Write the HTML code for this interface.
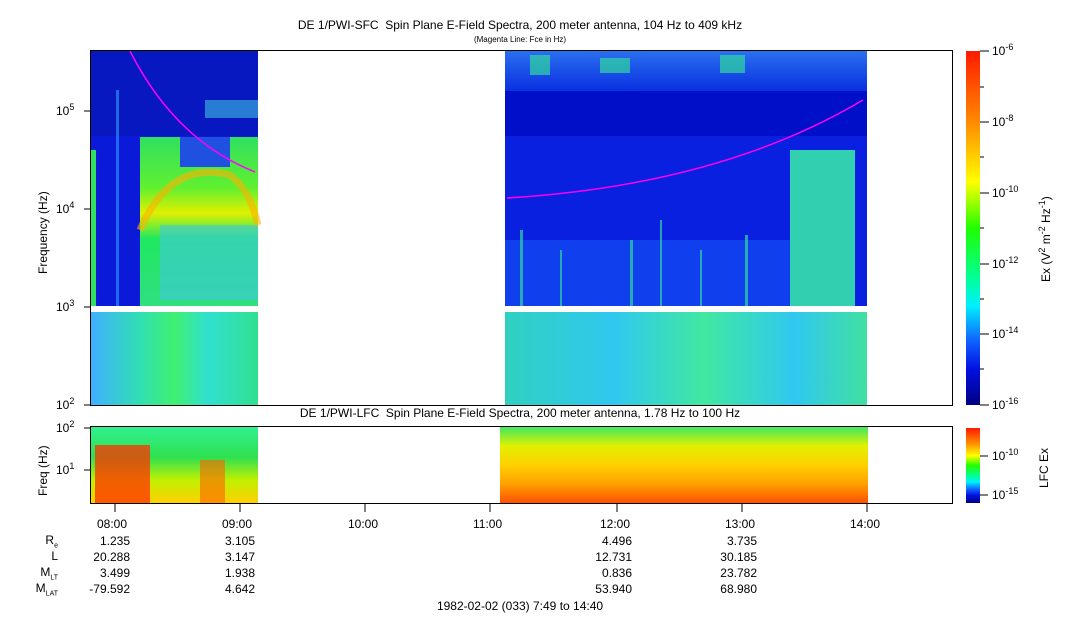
<!DOCTYPE html>
<html><head><meta charset="utf-8"><style>
body{margin:0;background:#fff;width:1083px;height:620px;overflow:hidden;font-family:"Liberation Sans",sans-serif;color:#000}
.t{position:absolute;font-size:12px;white-space:nowrap}
.r{text-align:right}
</style></head><body>
<div class="t" style="left:0;width:1040px;text-align:center;top:18px">DE 1/PWI-SFC&nbsp; Spin Plane E-Field Spectra, 200 meter antenna, 104 Hz to 409 kHz</div>
<div class="t" style="left:0;width:1040px;text-align:center;top:35px;font-size:8px">(Magenta Line: Fce in Hz)</div>
<div class="t" style="left:0;width:1040px;text-align:center;top:406px">DE 1/PWI-LFC&nbsp; Spin Plane E-Field Spectra, 200 meter antenna, 1.78 Hz to 100 Hz</div>

<svg width="1083" height="620" style="position:absolute;left:0;top:0">
<defs>
<linearGradient id="cb" x1="0" y1="0" x2="0" y2="1">
<stop offset="0" stop-color="#ff1a00"/><stop offset="0.2" stop-color="#ff8a00"/><stop offset="0.37" stop-color="#ffff00"/><stop offset="0.5" stop-color="#20ff00"/><stop offset="0.65" stop-color="#00ffa0"/><stop offset="0.72" stop-color="#00f0ff"/><stop offset="0.82" stop-color="#1060ff"/><stop offset="0.9" stop-color="#0010e0"/><stop offset="1" stop-color="#000080"/></linearGradient>
<linearGradient id="arc" x1="0" y1="0" x2="0" y2="1">
<stop offset="0" stop-color="#30e060"/><stop offset="0.3" stop-color="#60f030"/><stop offset="0.45" stop-color="#e0f000"/><stop offset="0.6" stop-color="#20e860"/><stop offset="1" stop-color="#30e080"/></linearGradient>
<linearGradient id="low" x1="0" y1="0" x2="1" y2="0">
<stop offset="0" stop-color="#40b0ff"/><stop offset="0.3" stop-color="#30e0b0"/><stop offset="0.5" stop-color="#40f070"/><stop offset="0.7" stop-color="#30e0d0"/><stop offset="1" stop-color="#30e090"/></linearGradient>
<linearGradient id="low2" x1="0" y1="0" x2="1" y2="0">
<stop offset="0" stop-color="#30d0c0"/><stop offset="0.3" stop-color="#30c8f0"/><stop offset="0.55" stop-color="#40e8a0"/><stop offset="0.8" stop-color="#30c8f0"/><stop offset="1" stop-color="#40e0a0"/></linearGradient>
<linearGradient id="lf1" x1="0" y1="0" x2="0" y2="1">
<stop offset="0" stop-color="#30f090"/><stop offset="0.4" stop-color="#30e050"/><stop offset="0.7" stop-color="#c0f000"/><stop offset="1" stop-color="#ffd000"/></linearGradient>
<linearGradient id="lf2" x1="0" y1="0" x2="0" y2="1">
<stop offset="0" stop-color="#40e860"/><stop offset="0.25" stop-color="#e0f000"/><stop offset="0.5" stop-color="#ffd000"/><stop offset="0.75" stop-color="#ffa000"/><stop offset="1" stop-color="#ff5000"/></linearGradient>
<linearGradient id="rt" x1="0" y1="0" x2="0" y2="1">
<stop offset="0" stop-color="#2a70f0"/><stop offset="1" stop-color="#0a30e0"/></linearGradient>
</defs>
<rect x="91" y="51" width="167" height="255" fill="#0a1ad8"/>
<rect x="91" y="51" width="167" height="85" fill="#0818c0"/>
<rect x="140" y="137" width="118" height="169" fill="url(#arc)"/>
<rect x="180" y="137" width="50" height="30" fill="#2050e0"/>
<rect x="160" y="225" width="98" height="75" fill="#40c8e0" opacity="0.6"/>
<path d="M140 230 Q170 160 230 175 Q250 190 258 225" stroke="#ffb000" stroke-width="7" fill="none" opacity="0.6"/>
<rect x="91" y="150" width="5" height="156" fill="#30e060"/>
<rect x="116" y="90" width="3" height="216" fill="#30a0ff" opacity="0.6"/>
<rect x="205" y="100" width="53" height="18" fill="#40c0e0" opacity="0.6"/>
<rect x="91" y="312" width="167" height="93" fill="url(#low)"/>
<rect x="505" y="51" width="362" height="255" fill="#0a20e0"/>
<rect x="505" y="51" width="362" height="40" fill="url(#rt)"/>
<rect x="505" y="91" width="362" height="45" fill="#0010c8"/>
<rect x="790" y="150" width="65" height="156" fill="#30d0b0"/>
<rect x="505" y="240" width="285" height="66" fill="#1040ee"/>
<g fill="#30d8a0" opacity="0.7">
<rect x="520" y="230" width="3" height="76"/><rect x="560" y="250" width="2" height="56"/><rect x="630" y="240" width="3" height="66"/><rect x="660" y="220" width="2" height="86"/><rect x="700" y="250" width="2" height="56"/><rect x="745" y="235" width="3" height="71"/>
<rect x="530" y="55" width="20" height="20"/><rect x="600" y="58" width="30" height="15"/><rect x="720" y="55" width="25" height="18"/>
</g>
<rect x="505" y="312" width="362" height="93" fill="url(#low2)"/>
<path d="M130 51 Q175 140 255 172" stroke="#ff00ff" stroke-width="1.5" fill="none"/>
<path d="M507 198 Q720 185 863 100" stroke="#ff00ff" stroke-width="1.5" fill="none"/>
<rect x="90.5" y="50.5" width="862" height="355" fill="none" stroke="#000"/>
<rect x="91" y="427" width="167" height="76" fill="url(#lf1)"/>
<rect x="95" y="445" width="55" height="58" fill="#ff3000" opacity="0.75"/>
<rect x="200" y="460" width="25" height="43" fill="#ff6000" opacity="0.6"/>
<rect x="500" y="427" width="368" height="76" fill="url(#lf2)"/>
<rect x="90.5" y="426.5" width="862" height="77" fill="none" stroke="#000"/>
<rect x="966" y="51" width="14" height="354" fill="url(#cb)"/>
<rect x="966" y="428" width="14" height="75" fill="url(#cb)"/>
<g stroke="#000">
<line x1="980" y1="51" x2="989" y2="51"/><line x1="980" y1="122" x2="989" y2="122"/><line x1="980" y1="193" x2="989" y2="193"/><line x1="980" y1="264" x2="989" y2="264"/><line x1="980" y1="334" x2="989" y2="334"/><line x1="980" y1="405" x2="989" y2="405"/>
<line x1="980" y1="87" x2="984" y2="87"/><line x1="980" y1="157" x2="984" y2="157"/><line x1="980" y1="228" x2="984" y2="228"/><line x1="980" y1="299" x2="984" y2="299"/><line x1="980" y1="369" x2="984" y2="369"/>
<line x1="980" y1="456" x2="988" y2="456"/><line x1="980" y1="495" x2="988" y2="495"/>
<line x1="84" y1="111" x2="90" y2="111"/><line x1="84" y1="209" x2="90" y2="209"/><line x1="84" y1="307" x2="90" y2="307"/><line x1="84" y1="405" x2="90" y2="405"/>
<line x1="84" y1="428" x2="90" y2="428"/><line x1="84" y1="470" x2="90" y2="470"/>
<line x1="115" y1="504" x2="115" y2="512"/><line x1="240" y1="504" x2="240" y2="512"/><line x1="365" y1="504" x2="365" y2="512"/><line x1="490" y1="504" x2="490" y2="512"/><line x1="617" y1="504" x2="617" y2="512"/><line x1="742" y1="504" x2="742" y2="512"/><line x1="867" y1="504" x2="867" y2="512"/>
</g>
</svg>
<div class="t" style="left:56px;top:102px">10<sup style="font-size:9px">5</sup></div>
<div class="t" style="left:56px;top:200px">10<sup style="font-size:9px">4</sup></div>
<div class="t" style="left:56px;top:298px">10<sup style="font-size:9px">3</sup></div>
<div class="t" style="left:56px;top:396px">10<sup style="font-size:9px">2</sup></div>
<div class="t" style="left:56px;top:419px">10<sup style="font-size:9px">2</sup></div>
<div class="t" style="left:56px;top:461px">10<sup style="font-size:9px">1</sup></div>
<div class="t" style="left:36px;top:274px;transform:rotate(-90deg);transform-origin:0 0">Frequency (Hz)</div>
<div class="t" style="left:36px;top:496px;transform:rotate(-90deg);transform-origin:0 0">Freq (Hz)</div>
<div class="t" style="left:992px;top:42px">10<sup style="font-size:9px">-6</sup></div>
<div class="t" style="left:992px;top:113px">10<sup style="font-size:9px">-8</sup></div>
<div class="t" style="left:992px;top:184px">10<sup style="font-size:9px">-10</sup></div>
<div class="t" style="left:992px;top:255px">10<sup style="font-size:9px">-12</sup></div>
<div class="t" style="left:992px;top:325px">10<sup style="font-size:9px">-14</sup></div>
<div class="t" style="left:992px;top:396px">10<sup style="font-size:9px">-16</sup></div>
<div class="t" style="left:992px;top:447px">10<sup style="font-size:9px">-10</sup></div>
<div class="t" style="left:992px;top:486px">10<sup style="font-size:9px">-15</sup></div>
<div class="t" style="left:1037px;top:282px;transform:rotate(-90deg);transform-origin:0 0">Ex (V<sup style="font-size:9px">2</sup> m<sup style="font-size:9px">-2</sup> Hz<sup style="font-size:9px">-1</sup>)</div>
<div class="t" style="left:1037px;top:488px;transform:rotate(-90deg);transform-origin:0 0">LFC Ex</div>
<div class="t" style="left:97px;top:517px">08:00</div>
<div class="t" style="left:222px;top:517px">09:00</div>
<div class="t" style="left:348px;top:517px">10:00</div>
<div class="t" style="left:473px;top:517px">11:00</div>
<div class="t" style="left:600px;top:517px">12:00</div>
<div class="t" style="left:725px;top:517px">13:00</div>
<div class="t" style="left:850px;top:517px">14:00</div>
<div class="t r" style="left:0;width:58px;top:533px">R<sub style="font-size:7px">e</sub></div>
<div class="t r" style="left:0;width:58px;top:549px">L</div>
<div class="t r" style="left:0;width:58px;top:565px">M<sub style="font-size:7px">LT</sub></div>
<div class="t r" style="left:0;width:58px;top:581px">M<sub style="font-size:7px">LAT</sub></div>
<div class="t r" style="left:60px;width:70px;top:533px;line-height:16px">1.235<br>20.288<br>3.499<br>-79.592</div>
<div class="t r" style="left:185px;width:70px;top:533px;line-height:16px">3.105<br>3.147<br>1.938<br>4.642</div>
<div class="t r" style="left:562px;width:70px;top:533px;line-height:16px">4.496<br>12.731<br>0.836<br>53.940</div>
<div class="t r" style="left:687px;width:70px;top:533px;line-height:16px">3.735<br>30.185<br>23.782<br>68.980</div>
<div class="t" style="left:0;width:1040px;text-align:center;top:599px">1982-02-02 (033) 7:49 to 14:40</div>
</body></html>
